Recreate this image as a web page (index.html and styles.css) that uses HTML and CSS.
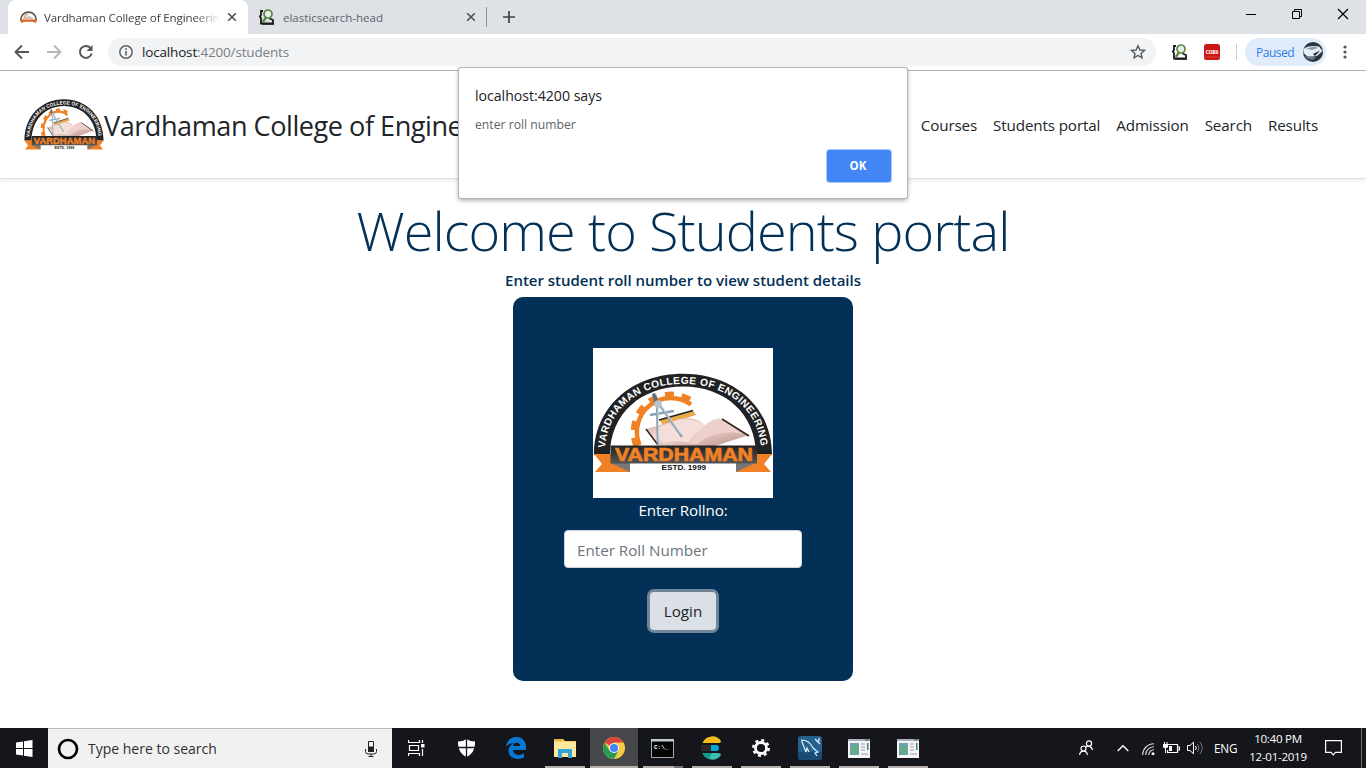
FILE: index.html
```html
<!DOCTYPE html>
<html lang="en">
<head>
<meta charset="utf-8">
<title>Vardhaman College of Engineering</title>
<link rel="stylesheet" href="styles.css">
</head>
<body>
<svg class="defs" width="0" height="0">
  <defs>
    <linearGradient id="page" x1="0" x2="1" y1="0" y2="1"><stop offset="0" stop-color="#c79c94"/><stop offset=".4" stop-color="#f6dfda"/><stop offset="1" stop-color="#b98d86"/></linearGradient>
    <linearGradient id="plate" x1="0" x2="0" y1="0" y2="1"><stop offset="0" stop-color="#222"/><stop offset="1" stop-color="#555"/></linearGradient>
    <path id="ring" d="M12 105 C12 62 46 35.800 90 35.800 C134 35.800 168 62 168 105"/>
    <symbol id="logo" viewBox="0 25 180 100" preserveAspectRatio="none">
      <path d="M1 107C1 59 39 25.700 90 25.700S179 59 179 107H163C163 66 132 38.500 90 38.500S17 66 17 107Z" fill="#222224"/>
      <text class="ring-text"><textPath href="#ring" startOffset="5" textLength="222" lengthAdjust="spacing">VARDHAMAN COLLEGE OF ENGINEERING</textPath></text>
      <path d="M46.500 97A34 34 0 0 1 98 56.500" fill="none" stroke="#f08125" stroke-width="4.500"/>
      <path d="M43 98.500A38 38 0 0 1 100.300 53.200" fill="none" stroke="#f08125" stroke-width="5" stroke-dasharray="9 8"/>
      <path d="M66 72L100 62.500L103 67L70 77Z" fill="#e9a94b"/><path d="M66 72L100 62.500" stroke="#222" stroke-width="1.500"/>
      <path d="M53 81L87 71Q103 68 112 77Q122 69 129 71L156 87L122 98H67Z" fill="url(#page)"/>
      <path d="M63 80L87 71Q103 70 111 79Q101 84 96 95Q85 91 70 95Z" fill="#f5ded9"/>
      <path d="M111 79Q121 69 129 72L150 86Q125 80 104 96H97Q101 84 111 79Z" fill="#edd0ca"/>
      <path d="M53 81L65 97M129 71L156 88" fill="none" stroke="#34201d" stroke-width="1.500"/>
      <path d="M64 56L65 97M66 56L89 89M57 67L81 63" fill="none" stroke="#8ba3b3" stroke-width="2.400"/>
      <path d="M65 57L66 94M67 56L88 86" fill="none" stroke="#dce5ea" stroke-width=".9"/>
      <path d="M59 46L62 45L67 57H62Z" fill="#596f7b"/><circle cx="65" cy="56" r="3.800" fill="#b4c3cc"/>
      <path d="M1 106H18V115H37V124H2L9 116ZM179 106H162V115H143V124H178L171 116Z" fill="#f08125"/>
      <path d="M18 115H37V124ZM162 115H143V124Z" fill="#777"/>
      <path d="M17.500 97.500H164V115.500H17.500Z" fill="url(#plate)"/>
      <text x="22" y="113.300" class="plate-text" textLength="138" lengthAdjust="spacingAndGlyphs">VARDHAMAN</text>
      <text x="68.500" y="122.300" class="estd-text" textLength="44.500" lengthAdjust="spacingAndGlyphs">ESTD. 1999</text>
    </symbol>
    <symbol id="mini-logo" viewBox="0 0 17 12">
      <path d="M.8 9C.8-1.500 16.200-1.500 16.200 9" fill="none" stroke="#555" stroke-width="1.600"/>
      <path d="M4 8Q4 3.500 8.500 3.300" fill="none" stroke="#e9965b" stroke-width="1.300"/><path d="M5 6L9 5L12 6L14 8H5Z" fill="#dbc0b8"/>
      <path d="M0 8.500H17L16 12L13 10.800H4L1 12Z" fill="#d9641e"/>
    </symbol>
    <symbol id="es-head" viewBox="0 0 16 16">
      <path d="M4 2H2V6L.8 7.500L2 9V14.500H14V11L10.500 9.500" fill="none" stroke="#1b1b1b" stroke-width="1.800"/>
      <path d="M3 15H15" stroke="#1b1b1b" stroke-width="1.500"/>
      <circle cx="9" cy="5" r="4" fill="#e2f0ee" stroke="#58873a" stroke-width="1.700"/><path d="M7 8.500L3.800 13" stroke="#58873a" stroke-width="2.200"/>
    </symbol>
    <symbol id="close" viewBox="0 0 10 10"><path d="M1.200 1.200L8.800 8.800M8.800 1.200L1.200 8.800" stroke="#4d5156" stroke-width="1.600"/></symbol>
    <symbol id="app-window" viewBox="0 0 22 19">
      <path d="M0 0H22V19H0Z" fill="#f4f4f4"/><path d="M0 0H22V2H0Z" fill="#aab0b8"/><path d="M17 .5H21V1.500H17Z" fill="#555"/>
      <path d="M2 4H11V16H2Z" fill="#6f9fb4"/><path d="M3 8L10 5V15H3Z" fill="#62ac83"/>
      <path d="M13 5H17M13 8H17M13 11H17M13 15H20" stroke="#bbb" stroke-width="1.500"/><path d="M19 4H20.500V11H19Z" fill="#3d8091"/>
    </symbol>
  </defs>
</svg>

<div class="screen">
  <header class="tabstrip">
    <div class="tab active">
      <svg width="17" height="12"><use href="#mini-logo"/></svg>
      <span class="tab-title fade">Vardhaman College of Engineering</span>
      <svg class="tab-close" width="10" height="10"><use href="#close"/></svg>
    </div>
    <div class="tab">
      <svg width="16" height="16"><use href="#es-head"/></svg>
      <span class="tab-title">elasticsearch-head</span>
      <svg class="tab-close" width="10" height="10"><use href="#close"/></svg>
    </div>
    <svg class="plus" width="12" height="12" viewBox="0 0 12 12"><path d="M6 0V12M0 6H12" stroke="#3f4347" stroke-width="1.700"/></svg>
    <svg class="window-controls" width="104" height="12" viewBox="0 0 104 12"><path d="M0 6.500H10" stroke="#000"/><path d="M46.500 3.500H53.500V10.500H46.500ZM48.500 3.500V1.500H55.500V8.500H53.500" fill="none" stroke="#000"/><path d="M92 1L102 11M102 1L92 11" stroke="#000" stroke-width="1.200"/></svg>
  </header>

  <div class="toolbar">
    <svg class="nav-buttons" width="80" height="16" viewBox="0 0 80 16">
      <path d="M15 8H2M8 1.500L1.500 8L8 14.500" fill="none" stroke="#53575b" stroke-width="1.900"/>
      <path d="M33 8H46M40 1.500L46.500 8L40 14.500" fill="none" stroke="#b5b7b9" stroke-width="1.900"/>
      <path d="M76.500 4A6 6 0 1 0 77.700 9.500" fill="none" stroke="#53575b" stroke-width="2"/><path d="M78.500 1V7H72.500Z" fill="#53575b"/>
    </svg>
    <div class="omnibox">
      <svg width="14" height="14" viewBox="0 0 14 14"><circle cx="7" cy="7" r="6.200" fill="none" stroke="#5f6368" stroke-width="1.500"/><path d="M7 6V10.500M7 3.300V4.900" stroke="#5f6368" stroke-width="1.600"/></svg>
      <span class="url"><b>localhost</b>:4200/students</span>
      <svg class="star" width="16" height="16" viewBox="0 0 16 16"><path d="M8 1.800L9.900 6L14.400 6.400L11 9.400L12 13.900L8 11.500L4 13.900L5 9.400L1.600 6.400L6.100 6Z" fill="none" stroke="#55595e" stroke-width="1.400"/></svg>
    </div>
    <svg class="ext-head" width="16" height="16"><use href="#es-head"/></svg>
    <svg class="ext-cors" width="16" height="16" viewBox="0 0 16 16"><rect width="16" height="16" rx="2.500" fill="#c91818"/><path d="M0 13H16" stroke="#e33b3b"/><text x="1.800" y="10.300" class="cors-text" textLength="12.500" lengthAdjust="spacingAndGlyphs">CORS</text></svg>
    <div class="profile">
      <span>Paused</span>
      <svg width="20" height="20" viewBox="0 0 20 20"><circle cx="10" cy="10" r="10" fill="#2c333d"/><path d="M.5 7Q5 3 16 4.500L19.500 9L14 14L5 15L.5 11Z" fill="#e4edf5"/><path d="M3 6.500L11 4.500L15 6L9 8Z" fill="#8b9cae"/><path d="M10 12L17 8.500L15 11L12 14Z" fill="#222b36"/><path d="M2 14L13 15L10 18L5 17Z" fill="#6c7886"/></svg>
    </div>
    <svg class="kebab" width="4" height="14" viewBox="0 0 4 14"><g fill="#505458"><circle cx="2" cy="2" r="1.600"/><circle cx="2" cy="7" r="1.600"/><circle cx="2" cy="12" r="1.600"/></g></svg>
  </div>

  <nav class="navbar">
    <svg class="brand-logo" width="80" height="51"><use href="#logo"/></svg>
    <span class="brand">Vardhaman College of Engineering</span>
    <div class="links"><a>Courses</a><a>Students portal</a><a>Admission</a><a>Search</a><a>Results</a></div>
  </nav>

  <main class="content">
    <h1>Welcome to Students portal</h1>
    <p class="hint">Enter student roll number to view student details</p>
    <form class="card">
      <div class="card-logo"><svg width="180" height="100"><use href="#logo"/></svg></div>
      <label for="roll">Enter Rollno:</label>
      <input id="roll" type="text" placeholder="Enter Roll Number">
      <button type="button" class="login">Login</button>
    </form>
  </main>

  <footer class="taskbar">
    <div class="start"><svg width="17" height="17" viewBox="0 0 17 17"><path d="M0 2.400L7 1.400V8H0ZM8 1.200L16.500 0V8H8ZM0 9H7V15.600L0 14.600ZM8 9H16.500V17L8 15.800Z" fill="#fff"/></svg></div>
    <div class="search">
      <svg width="22" height="22" viewBox="0 0 22 22"><circle cx="11" cy="11" r="9" fill="none" stroke="#000" stroke-width="2.700"/></svg>
      <span>Type here to search</span>
      <svg class="mic" width="12" height="16" viewBox="0 0 12 16"><path d="M3.500.5H8.500V10.500H3.500Z" fill="none" stroke="#222"/><path d="M3 5.500H9V11H3Z" fill="#222"/><path d="M.5 8V10.500Q.5 13 3 13H9Q11.500 13 11.500 10.500V8M6 13V15.500M3.500 15.500H8.500" fill="none" stroke="#222"/></svg>
    </div>
    <div class="apps">
      <div class="app task-view"><svg width="17" height="16" viewBox="0 0 17 16"><path d="M.5 0V2.500H11.500V0M.5 16V13.500H11.500V16M1.500 5.500H10.500V10.500H1.500ZM14.500 0V3M14.500 9V16" fill="none" stroke="#fff" stroke-width="1.200"/><path d="M13 4H16.500V7.500H13Z" fill="#fff"/></svg></div>
      <div class="app"><svg width="17" height="18" viewBox="0 0 17 18"><path d="M8.500 0Q12 2.500 17 2.500Q17.500 14 8.500 18Q-.5 14 0 2.500Q5 2.500 8.500 0Z" fill="#fff"/><path d="M8.500 0V18M0 8.500H17" stroke="#15171c" stroke-width="1.300"/></svg></div>
      <div class="app"><svg width="20" height="22" viewBox="0 0 20 22"><path d="M0 10C1 3 5 0 10.500 0C17 0 20 5 20 10V13H7C7.500 18.500 14 19 18 16.500V20.500C12 23.500 3 22 2.500 14C2.500 10.500 4.500 7.500 8 6C4 6 1.500 8 0 10ZM7 9H14C14 4.500 7.500 5 7 9Z" fill="#0878d7"/></svg></div>
      <div class="app open"><svg width="22" height="19" viewBox="0 0 22 19"><path d="M0 1Q0 0 1 0H9L11 2H22V18H0Z" fill="#f7cf62"/><path d="M0 3H22V18H0Z" fill="#ffe79b"/><path d="M1 1H8" stroke="#e29b27"/><path d="M4 10H18V19H14V14H8V19H4Z" fill="#32a5de"/></svg></div>
      <div class="app open current"><svg width="22" height="22" viewBox="0 0 22 22"><circle cx="11" cy="11" r="11" fill="#f7cc45"/><path d="M11 11L1.500 5.500A11 11 0 0 1 20.500 5.500H11Z" fill="#db4437"/><path d="M1.500 5.500A11 11 0 0 0 11 22L15.500 13.500L11 11L6.500 13.500Z" fill="#269b55"/><circle cx="11" cy="11" r="5" fill="#f5f5f5"/><circle cx="11" cy="11" r="4" fill="#4285f4"/></svg></div>
      <div class="app open grouped"><svg width="23" height="19" viewBox="0 0 23 19"><path d="M.5.500H22.500V18.500H.5Z" fill="#050505" stroke="#a7abb0"/><path d="M0 0H23V2.500H0Z" fill="#c3cad2"/><text x="3" y="9.500" class="cmd-text">C:\_</text></svg></div>
      <div class="app open"><svg width="21" height="24" viewBox="0 0 21 24"><path d="M1.500 7A10.500 10.500 0 0 1 20 5Q20 7 17 7Z" fill="#f4bd19"/><path d="M1.500 17A10.500 10.500 0 0 0 20 19Q20 17 17 17Z" fill="#3ebeb0"/><path d="M1.500 17H11L8 23Q3 21 1.500 17Z" fill="#159b8c"/><path d="M0 9H11V15H0Z" fill="#2e2728"/><path d="M10 9H15Q18 9 18 12T15 15H10Z" fill="#07a5de"/></svg></div>
      <div class="app open"><svg width="18" height="18" viewBox="0 0 18 18"><circle cx="9" cy="9" r="5.500" fill="none" stroke="#fff" stroke-width="2.800"/><circle cx="9" cy="9" r="7.700" fill="none" stroke="#fff" stroke-width="2.500" stroke-dasharray="3 3.048"/></svg></div>
      <div class="app open"><svg width="24" height="24" viewBox="0 0 24 24"><rect width="24" height="24" rx="3" fill="#24618e"/><path d="M0 16H24V21Q24 24 21 24H3Q0 24 0 21Z" fill="#194c73"/><path d="M8 16L6 11Q3 4 4 4Q11 4 15 12L20 16L17 17L19 20M8 16L9 12L11 16M17 3L22 8M18 5H21V2" fill="none" stroke="#e5f0f6" stroke-width="1.200"/></svg></div>
      <div class="app open"><svg width="22" height="19"><use href="#app-window"/></svg></div>
      <div class="app open"><svg width="22" height="19"><use href="#app-window"/></svg></div>
    </div>
    <div class="tray">
      <svg class="people" width="14" height="16" viewBox="0 0 14 16"><g fill="none" stroke="#fff" stroke-width="1.200"><circle cx="10" cy="3.500" r="2.600"/><circle cx="4.500" cy="8.500" r="2.500"/><path d="M.6 15Q1 11.200 4.500 11.200T8.400 15M6.800 7.200Q8 6 10 6.300Q13 6.800 13.400 10"/></g></svg>
      <svg class="chevron" width="12" height="8" viewBox="0 0 12 8"><path d="M.7 7L6 1.700L11.300 7" fill="none" stroke="#fff" stroke-width="1.400"/></svg>
      <svg class="wifi" width="13" height="12" viewBox="0 0 13 12"><path d="M.7 12A11.300 11.300 0 0 1 12 .7M3.700 12A8.300 8.300 0 0 1 12 3.700M6.700 12A5.300 5.300 0 0 1 12 6.700" fill="none" stroke="#ddd" stroke-width="1.100"/><circle cx="11" cy="10.800" r="1.500" fill="#fff"/></svg>
      <svg class="battery" width="17" height="12" viewBox="0 0 17 12"><path d="M5 2.500H14.500V10.500H4.500V8M15 5H16.500V8H15" fill="none" stroke="#fff" stroke-width="1.200"/><path d="M6 4H9V9H6ZM0 2H5V5Q5 6 3.500 6H3V11H2V6H1.500Q0 6 0 5ZM1 0H2V2H1ZM3.500 0H4.500V2H3.500Z" fill="#fff"/></svg>
      <svg class="volume" width="16" height="14" viewBox="0 0 16 14"><path d="M.5 4.500H3L6.500 1.200V12.800L3 9.500H.5Z" fill="none" stroke="#fff"/><path d="M8.500 5Q10 7 8.500 9" fill="none" stroke="#fff"/><path d="M10.500 3Q13.500 7 10.500 11M13 1Q17.500 7 13 13" fill="none" stroke="#777"/></svg>
      <span class="lang">ENG</span>
      <div class="clock"><span>10:40 PM</span><span>12-01-2019</span></div>
      <svg class="notes" width="17" height="16" viewBox="0 0 17 16"><path d="M.6.600H16.400V12.400H10.500L8.200 14.800L6 12.400H.6Z" fill="none" stroke="#fff" stroke-width="1.200"/></svg>
      <i class="peek"></i>
    </div>
  </footer>

  <section class="dialog" role="alertdialog">
    <div class="dialog-title">localhost:4200 says</div>
    <div class="dialog-message">enter roll number</div>
    <button class="ok" type="button">OK</button>
  </section>
</div>
</body>
</html>
```

FILE: styles.css
```css
* { box-sizing: border-box; }
body { margin: 0; font-family: "Open Sans", "Noto Sans", sans-serif; color: #212529; background: #fff; overflow: hidden; }
svg { display: block; flex: none; }
.defs { position: absolute; }
.screen { position: relative; width: 1366px; height: 768px; display: flex; flex-direction: column; white-space: nowrap; }

.ring-text { font: bold 10.2px "Liberation Sans", sans-serif; fill: #fff; }
.plate-text { font: 900 18px "Liberation Sans", sans-serif; fill: #f08125; stroke: #f08125; stroke-width: .7px; }
.estd-text { font: bold 6.8px "Liberation Sans", sans-serif; fill: #111; }
.cors-text { font: bold 6px "Liberation Serif", serif; fill: #fff; stroke: #fff; stroke-width: .2px; }
.cmd-text { font: bold 6px "Liberation Mono", monospace; fill: #fff; }

.tabstrip { height: 34px; background: #dee1e6; display: flex; align-items: center; padding-left: 8px; }
.tab { height: 34px; width: 239px; display: flex; align-items: center; padding: 0 11px; color: #5f6368; font-size: 11.5px; }
.tab.active { width: 240px; background: #fff; border-radius: 8px 8px 0 0; color: #3c4043; }
.tab:not(.active) { height: 20px; border-right: 1px solid #8d9094; }
.tab:not(.active) .tab-close { margin-right: -1px; }
.tab-title { margin-left: 8px; width: 176px; overflow: hidden; }
.tab.active svg:first-child { margin-left: 1px; }
.tab-title.fade { margin-left: 7px; letter-spacing: -.1px; -webkit-mask-image: linear-gradient(90deg, #000 150px, transparent 177px); }
.tab-close { margin-left: auto; }
.plus { margin-left: 16px; }
.window-controls { margin: -6px 16px 0 auto; }

.toolbar { height: 37px; border-bottom: 1px solid #b0b1b3; display: flex; align-items: center; padding-left: 14px; }
.omnibox { margin-left: 14px; width: 1048px; height: 28px; border-radius: 14px; background: #f1f3f4; display: flex; align-items: center; padding: 0 10px 0 11px; }
.url { margin-left: 9px; font-size: 13.5px; letter-spacing: -.17px; color: #7b8085; }
.url b { font-weight: 400; color: #202124; }
.star { margin-left: auto; }
.ext-head { margin-left: 16px; }
.ext-cors { margin-left: 16px; }
.profile { margin-left: 25px; width: 81px; height: 28px; border-radius: 14px; background: #e1ecfb; display: flex; align-items: center; justify-content: space-between; padding: 0 3px 0 11px; color: #2b7de9; font-size: 12px; letter-spacing: -.5px; position: relative; }
.profile::before { content: ""; position: absolute; left: -9px; top: 6px; width: 1px; height: 16px; background: #c9cbce; }
.kebab { margin-left: 17px; }

.navbar { height: 108px; border-bottom: 1px solid #dfe1e4; box-shadow: 0 2px 4px rgba(0,0,0,.07); display: flex; align-items: center; padding: 0 48px 0 24px; }
.brand { font-size: 27.1px; letter-spacing: -.47px; padding-top: 2px; }
.links { margin-left: auto; display: flex; gap: 16px; font-size: 15.2px; letter-spacing: -.13px; }

.content { flex: 1; display: flex; flex-direction: column; align-items: center; color: #033056; }
h1 { margin: 18px 0 0; font-size: 54px; line-height: 67px; font-weight: 300; letter-spacing: -.9px; }
.hint { margin: 4px 0 0; font-size: 15px; font-weight: 600; line-height: 24px; letter-spacing: -.02px; }
.card { margin-top: 5px; width: 340px; height: 384px; background: #033056; border-radius: 10px; padding-top: 51px; display: flex; flex-direction: column; align-items: center; color: #fff; }
.card-logo { width: 180px; height: 150px; background: #fff; padding-top: 25px; }
.card label { font-size: 15.2px; line-height: 24px; letter-spacing: -.1px; }
.card input { margin-top: 8px; width: 238px; height: 38px; border: 1px solid #ced4da; border-radius: 4px; padding: 1px 12px 0; font: 15.2px "Open Sans", sans-serif; }
.card input::placeholder { color: #6c757d; opacity: 1; }
.login { margin-top: 24px; width: 66px; height: 38px; border: 0; border-radius: 4px; background: #dae0e5; box-shadow: 0 0 0 3px #6f8599; color: #212529; font: 15.2px "Open Sans", sans-serif; padding: 0; }

.taskbar { height: 40px; background: #14161b; display: flex; color: #fff; }
.start { width: 48px; display: flex; align-items: center; justify-content: center; }
.search { width: 344px; background: #f1f1f1; border-top: 1px solid #bcbcbc; display: flex; align-items: center; padding: 0 15px 0 9px; color: #303030; font-size: 14px; }
.search span { margin-left: 9px; }
.mic { margin-left: auto; }
.apps { display: flex; gap: 1px; margin-left: 2px; }
.app { width: 48px; height: 40px; display: flex; align-items: center; justify-content: center; position: relative; padding-right: 1px; }
.task-view { padding-right: 4px; }
.open::after { content: ""; position: absolute; left: 4px; right: 4px; bottom: 0; height: 2px; background: #b5afaa; }
.current { background: #46484c; }
.current::after { left: 0; right: 0; }
.grouped::after { background: linear-gradient(90deg, #b5afaa 31px, #777370 31px); }
.tray { margin-left: auto; display: flex; align-items: center; }
.people { margin-right: 1px; }
.chevron { margin-left: 23px; }
.wifi { margin: 2px 0 0 13px; }
.battery { margin-left: 8px; }
.volume { margin-left: 7px; }
.lang { margin-left: 11px; width: 24px; font-size: 11.7px; letter-spacing: -.2px; }
.clock { margin-left: 10px; width: 60px; display: flex; flex-direction: column; align-items: center; font-size: 11.6px; line-height: 18px; letter-spacing: -.3px; }
.notes { margin-left: 17px; }
.peek { margin-left: 19px; width: 1px; height: 40px; background: #6b6c6f; margin-right: 4px; }

.dialog { position: absolute; left: 459px; top: 68px; width: 448px; height: 130px; background: #fff; border-radius: 2px; box-shadow: 0 0 0 1px #b3b3b3, 0 2px 5px rgba(0,0,0,.4); padding: 17px 16px 16px; display: flex; flex-direction: column; }
.dialog-title { font-size: 14.1px; line-height: 22px; color: #202124; }
.dialog-message { margin-top: 9px; font-size: 12.2px; line-height: 17px; color: #5f6368; }
.ok { margin: auto 0 0 auto; width: 64px; height: 32px; border: 0; border-radius: 3px; background: #4285f4; box-shadow: 0 0 0 1px #a9c8fa; color: #fff; font: bold 11.5px "Open Sans", sans-serif; padding: 0 2px 2px 0; }
```
